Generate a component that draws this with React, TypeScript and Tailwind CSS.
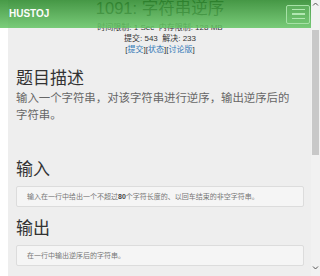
import type React from "react";
import type { ReactElement } from "react";

const CJK = "font-['Liberation_Sans','Noto_Sans_CJK_SC',sans-serif]";

const Navbar: React.FC = (): ReactElement => {
  return (
    <nav className="absolute top-0 left-0 right-0 h-[28px] flex items-center justify-between pl-[9px] pr-[1px] bg-gradient-to-b from-[#2a8a2a] to-[#66c666] opacity-[0.86]">
      <span className="text-white font-bold text-[10px] leading-none font-['Liberation_Sans',sans-serif]">
        HUSTOJ
      </span>
      <button className="w-[24px] h-[19px] border border-[#9be09b] rounded-[2px] bg-[#5cbf5c]/40 flex flex-col items-center justify-center gap-[3px]">
        <span className="block w-[13px] h-[1.5px] bg-[#a8e6a8]" />
        <span className="block w-[13px] h-[1.5px] bg-[#a8e6a8]" />
        <span className="block w-[13px] h-[1.5px] bg-[#a8e6a8]" />
      </button>
    </nav>
  );
};

const Scrollbar: React.FC = (): ReactElement => {
  return (
    <div className="w-[9px] h-full bg-[#f1f1f1] flex flex-col items-center">
      <svg width="7" height="6" viewBox="0 0 7 6" className="mt-[1px]">
        <path d="M1 4.5 L3.5 2 L6 4.5" stroke="#555" strokeWidth="1" fill="none" />
      </svg>
      <div className="mt-[23px] w-[7px] h-[125px] bg-[#c8c8c8]" />
      <div className="flex-1" />
      <svg width="7" height="6" viewBox="0 0 7 6" className="mb-[5px]">
        <path d="M1 1.5 L3.5 4 L6 1.5" stroke="#555" strokeWidth="1" fill="none" />
      </svg>
    </div>
  );
};

const Box: React.FC<{ children: React.ReactNode }> = ({ children }): ReactElement => {
  return (
    <div className="mt-[5px] h-[21px] flex items-center pl-[10px] border border-[#dcdcdc] rounded-[2px] bg-[#f5f5f5] text-[7px] text-[#777] leading-none">
      {children}
    </div>
  );
};

export default function App(): ReactElement {
  return (
    <div className={`w-[320px] h-[276px] overflow-hidden flex bg-white ${CJK}`}>
      <div className="relative flex-1 h-full overflow-hidden">
        <div className="ml-[8px] pl-[8px] pr-[7px] bg-[#eeeeee] min-h-[300px]">
          <div className="text-center text-[#333]">
            <h1 className="text-[16.5px] leading-[16px] text-[#333]">1091: 字符串逆序</h1>
            <div className="mt-[6px] text-[8px] leading-[11px]">
              <div>时间限制: 1 Sec&nbsp;&nbsp;内存限制: 128 MB</div>
              <div>提交: 543&nbsp;&nbsp;解决: 233</div>
              <div>
                [<a className="text-[#337ab7]">提交</a>][<a className="text-[#337ab7]">状态</a>][
                <a className="text-[#337ab7]">讨论版</a>]
              </div>
            </div>
          </div>

          <h2 className="mt-[13px] text-[17px] leading-[22px] text-[#333]">题目描述</h2>
          <p className="mr-[6px] text-[11.4px] leading-[17px] text-[#666]">
            输入一个字符串，对该字符串进行逆序，输出逆序后的字符串。
          </p>

          <h2 className="mt-[35px] text-[17px] leading-[22px] text-[#333]">输入</h2>
          <Box>
            输入在一行中给出一个不超过<b className="text-[#444]">80</b>个字符长度的、以回车结束的非空字符串。
          </Box>

          <h2 className="mt-[11px] text-[17px] leading-[22px] text-[#333]">输出</h2>
          <Box>在一行中输出逆序后的字符串。</Box>

          <h2 className="mt-[12px] text-[17px] leading-[22px] text-[#333]">输入样例</h2>
        </div>
        <Navbar />
      </div>
      <Scrollbar />
    </div>
  );
}
